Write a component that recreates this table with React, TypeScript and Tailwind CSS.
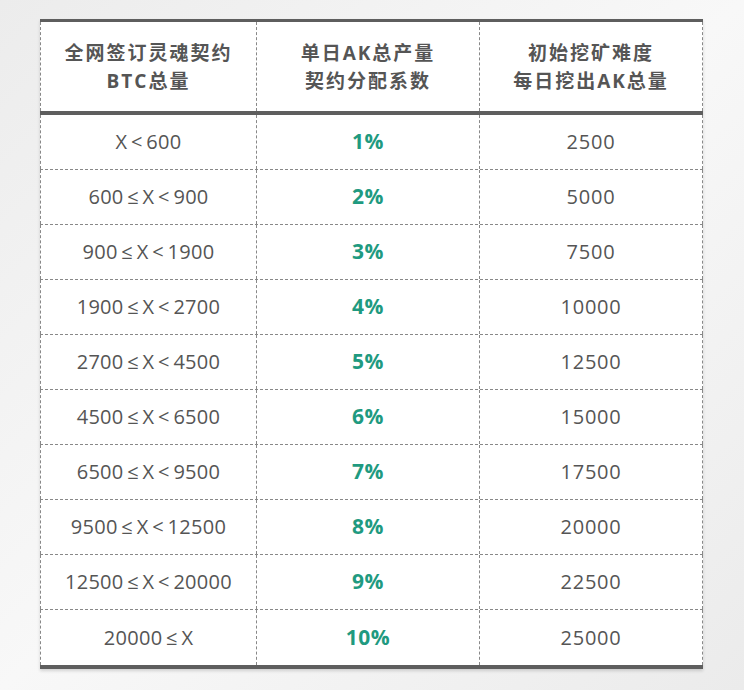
const rows: [string, string, string][] = [
  ['X<600', '1%', '2500'],
  ['600≤X<900', '2%', '5000'],
  ['900≤X<1900', '3%', '7500'],
  ['1900≤X<2700', '4%', '10000'],
  ['2700≤X<4500', '5%', '12500'],
  ['4500≤X<6500', '6%', '15000'],
  ['6500≤X<9500', '7%', '17500'],
  ['9500≤X<12500', '8%', '20000'],
  ['12500≤X<20000', '9%', '22500'],
  ['20000≤X', '10%', '25000'],
]

const App = (): JSX.Element => {
  return (
    <div className="w-[744px] h-[690px] overflow-hidden bg-gradient-to-br from-[#ececec] via-[#f8f8f8] to-[#ebebeb] pt-[19px] pl-[40px] font-['Open_Sans','Noto_Sans_CJK_SC',sans-serif]">
      <div className="w-[663px] bg-white border-t-[3px] border-b-[4px] border-[#5e5e5e] shadow-[0_2px_3px_rgba(0,0,0,0.15)]">
        {/* Header */}
        <div className="grid grid-cols-[216px_223px_224px] h-[93px] border-b-[4px] border-[#5e5e5e] text-[#555] font-bold text-[19px] leading-[28px] tracking-[2px]">
          <div className="flex flex-col items-center justify-center border-l border-dashed border-[#888]">
            <span>全网签订灵魂契约</span>
            <span>BTC总量</span>
          </div>
          <div className="flex flex-col items-center justify-center border-l border-dashed border-[#888]">
            <span>单日AK总产量</span>
            <span>契约分配系数</span>
          </div>
          <div className="flex flex-col items-center justify-center border-l border-r border-dashed border-[#888]">
            <span>初始挖矿难度</span>
            <span>每日挖出AK总量</span>
          </div>
        </div>

        {rows.map(([range, pct, total], i) => (
          <div
            key={range}
            className={`grid grid-cols-[216px_223px_224px] h-[55px] text-[20px] ${
              i < rows.length - 1 ? 'border-b border-dashed border-[#888]' : ''
            }`}
          >
            <div className="flex items-center justify-center border-l border-dashed border-[#888] text-[#555] tracking-[0.3px]">
              {range.replace(/</g, ' < ').replace(/≤/g, ' ≤ ').replace(/ /g, '\u2009').trim()}
            </div>
            <div className="flex items-center justify-center border-l border-dashed border-[#888] text-[#1f9a80] font-bold text-[21px] tracking-[0.5px]">
              {pct}
            </div>
            <div className="flex items-center justify-center border-l border-r border-dashed border-[#888] text-[#555] tracking-[0.8px]">
              {total}
            </div>
          </div>
        ))}
      </div>
    </div>
  )
}

export default App
